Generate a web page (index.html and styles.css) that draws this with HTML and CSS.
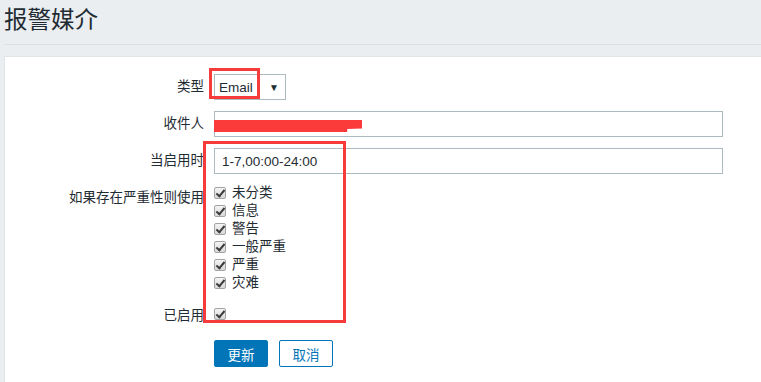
FILE: index.html
```html
<!DOCTYPE html>
<html lang="zh-CN">
<head>
<meta charset="utf-8">
<title>报警媒介</title>
<link rel="stylesheet" href="styles.css">
</head>
<body>
<header class="page-header">
  <h1 class="page-title">报警媒介</h1>
</header>
<main class="panel">
  <div class="form-row">
    <label class="form-label">类型</label>
    <div class="form-field">
      <div class="select">
        <span class="select-value">Email</span>
        <span class="select-arrow">▼</span>
      </div>
    </div>
  </div>
  <div class="form-row">
    <label class="form-label">收件人</label>
    <div class="form-field">
      <div class="text-input wide masked">
        <span class="masked-text">abc   defgh  lijk</span>
        <span class="scribble"></span>
      </div>
    </div>
  </div>
  <div class="form-row">
    <label class="form-label">当启用时</label>
    <div class="form-field">
      <div class="text-input wide">1-7,00:00-24:00</div>
    </div>
  </div>
  <div class="form-row severity-row">
    <label class="form-label severity-label">如果存在严重性则使用</label>
    <ul class="check-list">
      <li class="check-item"><span class="checkbox"></span>未分类</li>
      <li class="check-item"><span class="checkbox"></span>信息</li>
      <li class="check-item"><span class="checkbox"></span>警告</li>
      <li class="check-item"><span class="checkbox"></span>一般严重</li>
      <li class="check-item"><span class="checkbox"></span>严重</li>
      <li class="check-item"><span class="checkbox"></span>灾难</li>
    </ul>
  </div>
  <div class="form-row enabled-row">
    <label class="form-label enabled-label">已启用</label>
    <div class="check-item"><span class="checkbox"></span></div>
  </div>
  <div class="form-row buttons-row">
    <span class="form-label"></span>
    <div class="buttons">
      <button class="btn btn-primary">更新</button>
      <button class="btn btn-secondary">取消</button>
    </div>
  </div>
</main>
<div class="mark mark-type"></div>
<div class="mark mark-block"></div>
</body>
</html>
```
FILE: styles.css
```css
* { box-sizing: border-box; }
html, body { margin: 0; padding: 0; }
body {
  background: #ebeef0;
  color: #1f2c33;
  font-family: "Liberation Sans", "Noto Sans CJK SC", sans-serif;
  font-size: 13px;
  width: 761px;
  height: 382px;
  overflow: hidden;
  position: relative;
}
.page-header {
  height: 45px;
  margin-left: 4px;
  border-bottom: 1px solid #dce1e4;
  display: flex;
  align-items: center;
}
.page-title {
  margin: 0;
  font-weight: normal;
  font-size: 23.5px;
  line-height: 1;
  padding-bottom: 2px;
  color: #1f2c33;
}
.panel {
  margin: 11px 0 0 4px;
  background: #fff;
  border: 1px solid #dfe4e7;
  border-right: none;
  border-bottom: none;
  padding: 17px 0 0 0;
  height: 326px;
  overflow: hidden;
}
.form-row {
  display: flex;
  align-items: center;
  margin-bottom: 11px;
}
.form-label {
  width: 199px;
  flex: none;
  text-align: right;
  margin-right: 10px;
  font-size: 13.5px;
  line-height: 18px;
}
.form-field { flex: none; }
.select {
  width: 72px;
  height: 26px;
  border: 1px solid #acbbc2;
  display: flex;
  align-items: center;
  justify-content: space-between;
  padding: 0 6px 0 4px;
  font-size: 13.5px;
}
.select-arrow { font-size: 10px; }
.text-input {
  height: 26px;
  border: 1px solid #acbbc2;
  display: flex;
  align-items: center;
  padding-left: 7px;
  font-size: 13.5px;
}
.wide { width: 509px; }
.masked { position: relative; }
.masked-text { color: #1f2c33; white-space: pre; padding-left: 8px; }
.scribble {
  position: absolute;
  left: -1px;
  top: 8px;
  width: 148px;
  height: 12px;
  background: #fb3a3a;
  clip-path: polygon(0 0, 100% 0, 100% 70%, 90% 75%, 90% 100%, 0 100%);
}
.severity-row {
  align-items: flex-start;
  margin-bottom: 13px;
  margin-top: -1px;
}
.severity-label { padding-top: 5px; }
.check-list {
  list-style: none;
  margin: 0;
  padding: 0;
}
.check-item {
  display: flex;
  align-items: center;
  height: 18px;
  font-size: 13.5px;
  line-height: 18px;
}
.checkbox {
  width: 12px;
  height: 12px;
  border: 1px solid #a3a3a3;
  border-radius: 2px;
  background: linear-gradient(#f4f4f4, #d8d8d8);
  margin-right: 6px;
  position: relative;
  flex: none;
}
.checkbox::after {
  content: "";
  position: absolute;
  left: 3px;
  top: 0px;
  width: 3px;
  height: 7px;
  border: solid #3c3c3c;
  border-width: 0 2px 2px 0;
  transform: rotate(40deg);
}
.enabled-row { align-items: flex-start; margin-bottom: 15px; }
.enabled-label { padding-top: 2px; }
.buttons { display: flex; gap: 11px; }
.btn {
  width: 54px;
  height: 27px;
  border-radius: 2px;
  font-family: "Liberation Sans", "Noto Sans CJK SC", sans-serif;
  font-size: 13.5px;
  padding: 0;
  cursor: pointer;
}
.btn-primary {
  background: #0275b8;
  border: 1px solid #0275b8;
  color: #fff;
}
.btn-secondary {
  background: #fff;
  border: 1px solid #0275b8;
  color: #0275b8;
}
.mark {
  position: absolute;
  border: 3px solid #f73b3b;
  pointer-events: none;
}
.mark-type {
  left: 209px;
  top: 68px;
  width: 51px;
  height: 31px;
}
.mark-block {
  left: 203px;
  top: 141px;
  width: 143px;
  height: 182px;
}
```
